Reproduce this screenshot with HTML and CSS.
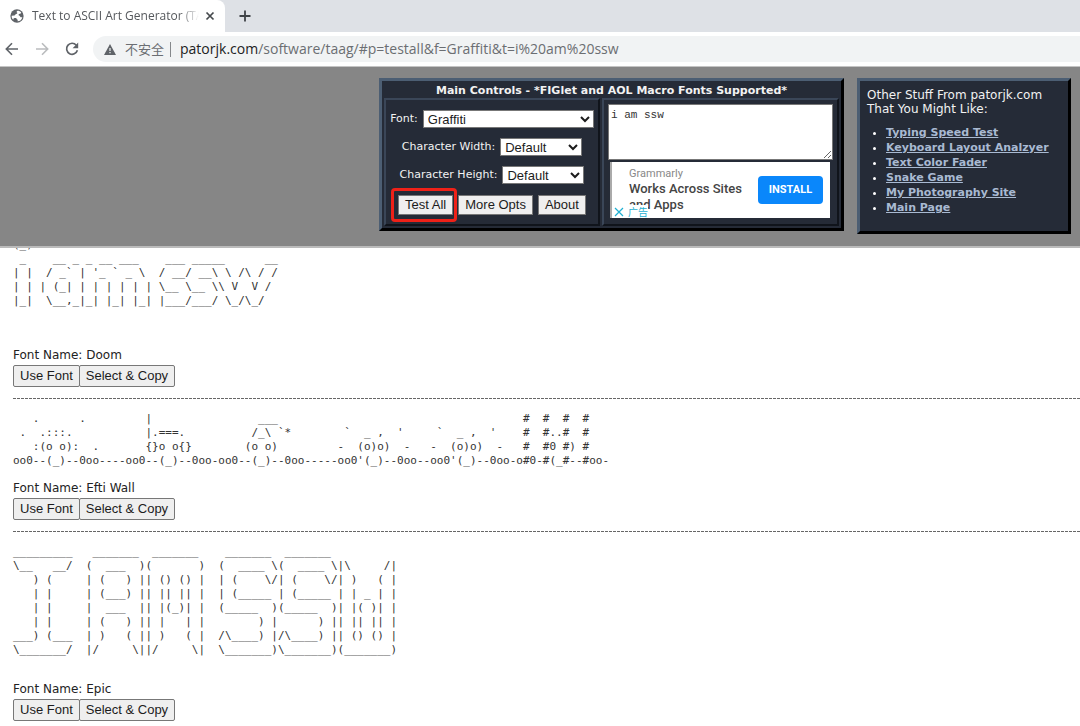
FILE: index.html
```html
<!DOCTYPE html>
<html lang="en">
<head>
<meta charset="utf-8">
<title>Text to ASCII Art Generator (TAAG)</title>
<link rel="stylesheet" href="styles.css">
</head>
<body>
<div class="browser">
  <div class="tabstrip">
    <div class="tab">
      <svg class="globe" viewBox="0 0 16 16" width="14" height="14" aria-hidden="true"><circle cx="8" cy="8" r="7.6" fill="#5f6368"/><path d="M8.600 1.900C7.400 2.400 7.200 3.500 8 4c1 .5.2 1.600-.9 1.600-1.200 0-1 1.500-2.200 1.800l-3 .2c-.2 2 .7 3.700 1.900 4.700.2-1.500.2-2 1.400-2.100 1.400 0 2-.2 2.300.8.3.9 1.500.6 1.400 1.800l-.4 1.300c2.900-.2 5.200-2.200 5.600-4.800-1.200.3-2 .2-2.600-.8-.6-1-1.800-.6-1.800-1.800 0-1.100 1.300-1.400 2.100-1.400.7 0 .5-1.100 1.100-1.300-1.100-1.400-2.600-2.100-4.300-2.100z" fill="#fff"/></svg>
      <span class="tab-title">Text to ASCII Art Generator (TAAG)</span>
      <button class="icon-btn" aria-label="Close tab"><svg width="10" height="10" viewBox="0 0 10 10"><path d="M1.500 1.500l7 7M8.500 1.500l-7 7" stroke="#45494d" stroke-width="1.700"/></svg></button>
    </div>
    <button class="icon-btn new-tab" aria-label="New tab"><svg width="12" height="12" viewBox="0 0 12 12"><path d="M6 .5v11M.5 6h11" stroke="#3f4347" stroke-width="1.800"/></svg></button>
  </div>
  <div class="toolbar">
    <button class="icon-btn" aria-label="Back"><svg width="14" height="14" viewBox="0 0 14 14" fill="none" stroke="#5f6368" stroke-width="1.600"><path d="M13 7H1.500M7 1.200L1.300 7 7 12.800"/></svg></button>
    <button class="icon-btn" aria-label="Forward"><svg width="14" height="14" viewBox="0 0 14 14" fill="none" stroke="#babcbe" stroke-width="1.600"><path d="M1 7h11.500M7 1.200L12.700 7 7 12.800"/></svg></button>
    <button class="icon-btn" aria-label="Reload"><svg width="14" height="14" viewBox="0 0 14 14"><path d="M11.300 3.200A5.500 5.500 0 1 0 12.400 8.300" fill="none" stroke="#5f6368" stroke-width="1.700"/><path d="M13.200.6v5.600H7.600z" fill="#5f6368"/></svg></button>
    <div class="address">
      <svg width="12" height="11" viewBox="0 0 12 11" aria-hidden="true"><path d="M6 0l6 11H0z" fill="#5f6368"/><path d="M6 4v3M6 8v1.300" stroke="#f1f3f4" stroke-width="1.200"/></svg>
      <span class="insecure">不安全</span>
      <span class="divider"></span>
      <span class="url"><b>patorjk.com</b>/software/taag/#p=testall&amp;f=Graffiti&amp;t=i%20am%20ssw</span>
    </div>
  </div>
</div>

<header class="site-head">
  <form class="panel controls">
    <h1>Main Controls - *FIGlet and AOL Macro Fonts Supported*</h1>
    <div class="cells">
      <div class="cell options">
        <div class="row"><label for="font">Font:</label><select id="font" class="wide"><option>Graffiti</option></select></div>
        <div class="row"><label for="cw">Character Width:</label><select id="cw"><option>Default</option></select></div>
        <div class="row"><label for="ch">Character Height:</label><select id="ch"><option>Default</option></select></div>
        <div class="row buttons">
          <span class="marked"><button type="button">Test All</button></span>
          <button type="button">More Opts</button>
          <button type="button">About</button>
        </div>
      </div>
      <div class="cell entry">
        <textarea aria-label="Text" spellcheck="false">i am ssw</textarea>
        <div class="ad">
          <div class="ad-copy"><span class="brand">Grammarly</span><span>Works Across Sites</span><span>and Apps</span></div>
          <button type="button" class="install">INSTALL</button>
          <span class="ad-tag"><svg width="10" height="10" viewBox="0 0 10 10" aria-hidden="true"><path d="M1 1l8 8M9 1L1 9" stroke="#1fb0d2" stroke-width="1.200"/></svg>广告</span>
        </div>
      </div>
    </div>
  </form>
  <aside class="panel links">
    <p>Other Stuff From patorjk.com<br>That You Might Like:</p>
    <ul>
      <li><a href="#">Typing Speed Test</a></li>
      <li><a href="#">Keyboard Layout Analzyer</a></li>
      <li><a href="#">Text Color Fader</a></li>
      <li><a href="#">Snake Game</a></li>
      <li><a href="#">My Photography Site</a></li>
      <li><a href="#">Main Page</a></li>
    </ul>
  </aside>
</header>

<main class="results">
  <section class="result doom">
<pre>
(_)
 _    __ _ _ __ ___    ___ _____      __
| |  / _` | '_ ` _ \  / __/ __\ \ /\ / /
| | | (_| | | | | | | \__ \__ \\ V  V /
|_|  \__,_|_| |_| |_| |___/___/ \_/\_/


</pre>
    <p>Font Name: Doom</p>
    <div class="actions"><button>Use Font</button><button>Select &amp; Copy</button></div>
  </section>
  <section class="result efti">
<pre>
   .      .         |                ___                                     #  #  #  #
 .  .:::.           |.===.          /_\ `*        `  _ ,  '     `  _ ,  '    #  #..#  #
   :(o o):  .       {}o o{}        (o o)         -  (o)o)  -   -  (o)o)  -   #  #0 #) #
oo0--(_)--0oo----oo0--(_)--0oo-oo0--(_)--0oo-----oo0'(_)--0oo--oo0'(_)--0oo-o#0-#(_#--#oo-
</pre>
    <p>Font Name: Efti Wall</p>
    <div class="actions"><button>Use Font</button><button>Select &amp; Copy</button></div>
  </section>
  <section class="result epic">
<pre>
_________   _______  _______    _______  _______
\__   __/  (  ___  )(       )  (  ____ \(  ____ \|\     /|
   ) (     | (   ) || () () |  | (    \/| (    \/| )   ( |
   | |     | (___) || || || |  | (_____ | (_____ | | _ | |
   | |     |  ___  || |(_)| |  (_____  )(_____  )| |( )| |
   | |     | (   ) || |   | |        ) |      ) || || || |
___) (___  | )   ( || )   ( |  /\____) |/\____) || () () |
\_______/  |/     \||/     \|  \_______)\_______)(_______)

</pre>
    <p>Font Name: Epic</p>
    <div class="actions"><button>Use Font</button><button>Select &amp; Copy</button></div>
  </section>
</main>
</body>
</html>
```
FILE: styles.css
```css
* { box-sizing: border-box; }
body { margin: 0; height: 100vh; display: flex; flex-direction: column; overflow: hidden; background: #fff; font: 11px/14px "DejaVu Sans", sans-serif; color: #222; }
h1, p, ul, pre { margin: 0; }
button, select { font: 13px/16px "Liberation Sans", sans-serif; color: #1c1c1c; }

.tabstrip { display: flex; align-items: center; height: 32px; background: #dee1e6; }
.tab { display: flex; align-items: center; align-self: stretch; width: 225px; padding: 0 10px; background: #fff; border-radius: 0 8px 0 0; }
.tab-title { flex: 1; margin-left: 8px; overflow: hidden; white-space: nowrap; font: 12px/16px "Open Sans", sans-serif; color: #55585c; -webkit-mask-image: linear-gradient(to right, #000 88%, transparent); mask-image: linear-gradient(to right, #000 88%, transparent); }
.icon-btn { display: flex; padding: 0; border: 0; background: none; }
.tab .icon-btn { margin-left: 6px; }
.new-tab { margin-left: 14px; }
.toolbar { display: flex; align-items: center; gap: 16px; height: 35px; padding: 3px 0 3px 5px; border-bottom: 1px solid #c4c4c4; }
.address { display: flex; flex: 1; align-items: center; height: 26px; margin-left: -2px; padding-left: 11px; border-radius: 13px 0 0 13px; background: #f1f3f4; color: #6b6e72; font: 14px/20px "Open Sans", "Noto Sans CJK SC", sans-serif; }
.insecure { margin-left: 9px; font: 13px/20px "Noto Sans CJK SC", sans-serif; }
.divider { width: 1px; height: 15px; margin: 0 9px 0 6px; background: #85888b; }
.url b { font-weight: 400; color: #222; }

.site-head { display: flex; justify-content: flex-end; align-items: flex-start; gap: 13px; padding: 11px 9px 12px; background: #868686; border-bottom: 2px solid #bbb; }
.panel { background: #252b37; color: #f2f2f2; border: 3px solid; border-color: #4c5e73 #000 #000 #4c5e73; }
.controls { width: 465px; padding: 2px; }
.controls h1 { font-size: 11px; line-height: 15px; text-align: center; }
.cells { display: grid; grid-template-columns: 216px 1fr; gap: 2px; }
.cell { border: 2px solid; border-color: #3a4658 #10141b #10141b #3a4658; height: 128px; }
.options { display: flex; flex-direction: column; padding: 5px 0 0; }
.row { display: flex; align-items: center; justify-content: center; gap: 5px; height: 28px; }
.row select { width: 82px; height: 18px; padding: 0; border: 1px solid #777; border-radius: 0; background-color: #fff; }
.row .wide { width: 171px; }
.row button, .actions button { height: 20px; padding: 0 6px; border: 1px solid #777; border-radius: 0; background: #efefef; white-space: nowrap; }
.row.buttons { height: 32px; }
.marked { position: relative; display: flex; }
.marked::after { content: ""; position: absolute; inset: -7px -4px -7px -7px; border: 3px solid #ef2118; border-radius: 4px; }
.entry { padding: 4px 4px 0; }
.entry textarea { display: block; width: 100%; height: 56px; padding: 3px 2px; border: 1px solid #777; background: #fff; color: #333; font: 11px/14px "Liberation Mono", monospace; resize: both; }
.ad { position: relative; display: flex; align-items: center; justify-content: space-between; height: 56px; margin: 2px 3px 0 2px; padding: 0 7px 0 17px; background: #fff; border-left: 2px solid #aaa; color: #444; font: 500 13px/16px Roboto, sans-serif; }
.ad-copy { display: flex; flex-direction: column; white-space: nowrap; }
.brand { font-size: 11px; line-height: 14px; font-weight: 400; color: #888; }
.install { width: 65px; height: 28px; padding: 0; border: 0; border-radius: 4px; background: #0a87fb; color: #fff; font: 700 11px/16px Roboto, sans-serif; }
.ad-tag { position: absolute; left: 0; bottom: 0; display: flex; align-items: center; gap: 4px; padding: 0 0 0 2px; background: #fff; color: #1fb0d2; font: 10px/13px "Noto Sans CJK SC", sans-serif; }
.links { width: 214px; height: 156px; padding: 7px; }
.links p { font-size: 12px; white-space: nowrap; }
.links ul { margin-top: 9px; padding-left: 19px; }
.links li { line-height: 15px; white-space: nowrap; }
.links li::marker { color: #fff; }
.links a { color: #a9bad2; font-weight: 700; }

.results { flex: 1; min-height: 0; overflow: hidden; padding-left: 13px; }
.result pre { font: 11px/14px "DejaVu Sans Mono", monospace; color: #333; }
.result p { font-size: 12px; line-height: 16px; }
.actions { display: flex; margin-top: 2px; }
.actions button { height: 22px; border-radius: 2px; }
.actions button + button { margin-left: -1px; }
.doom pre { margin-top: -10px; padding-bottom: 11px; }
.result + .result { margin-top: 11px; padding-top: 14px; background: repeating-linear-gradient(to right, #666 0 3px, #fff 3px 4px) top / 100% 1px no-repeat; }
.efti pre { padding-bottom: 12px; }
.epic pre { padding-bottom: 10px; }
```
